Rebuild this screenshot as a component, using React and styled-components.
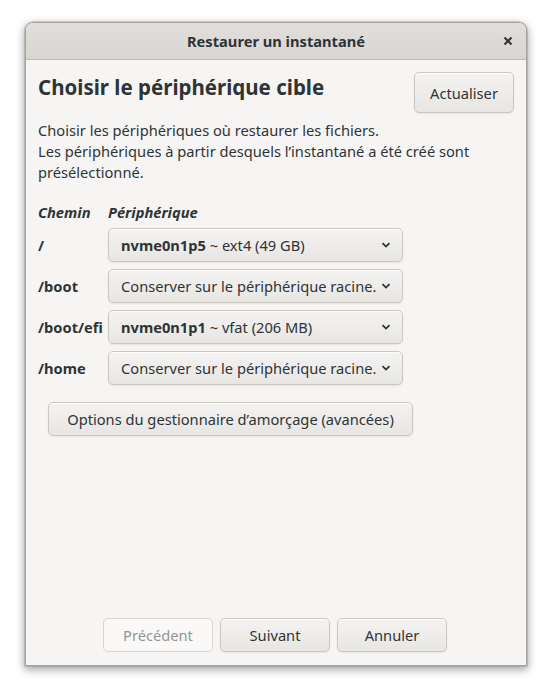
import React from 'react';
import styled, { createGlobalStyle } from 'styled-components';

const textColor = '#2e3436';
const borderColor = '#cdc7c2';
const baseSize = '14.67px';

const GlobalStyle = createGlobalStyle`
  html, body {
    margin: 0;
    padding: 0;
    background: #ffffff;
  }
  body {
    font-family: "Noto Sans", "Open Sans", sans-serif;
    font-size: ${baseSize};
    color: ${textColor};
  }
`;

const Screen = styled.div`
  width: 552px;
  height: 694px;
  box-sizing: border-box;
  padding: 22px 25px 0 25px;
`;

const Window = styled.div`
  width: 502px;
  height: 644px;
  box-sizing: border-box;
  display: flex;
  flex-direction: column;
  background: #f6f5f4;
  border: 1px solid #a8a39f;
  border-radius: 8px 8px 0 0;
  box-shadow: 0 3px 9px 1px rgba(0, 0, 0, 0.35), 0 0 0 1px rgba(0, 0, 0, 0.12);
  overflow: hidden;
`;

const TitleBar = styled.div`
  height: 36px;
  flex: none;
  display: flex;
  align-items: center;
  justify-content: center;
  position: relative;
  background: linear-gradient(#e1dedb, #dad6d2);
  border-bottom: 1px solid #bfb8b1;
  font-weight: bold;
`;

const CloseButton = styled.button`
  position: absolute;
  right: 9px;
  top: 9px;
  width: 18px;
  height: 18px;
  padding: 0;
  border: none;
  background: none;
  display: flex;
  align-items: center;
  justify-content: center;
  color: ${textColor};
`;

const Body = styled.div`
  flex: 1;
  display: flex;
  flex-direction: column;
  padding: 12px 12px 13px 12px;
`;

const Header = styled.div`
  display: flex;
  justify-content: space-between;
  align-items: flex-start;
`;

const Heading = styled.h1`
  margin: 0;
  padding: 1px 0 0 0;
  font-size: 20.5px;
  font-weight: bold;
  line-height: 28px;
`;

const Button = styled.button`
  box-sizing: border-box;
  height: ${(p) => p.$h || 34}px;
  width: ${(p) => (p.$w ? `${p.$w}px` : 'auto')};
  padding: 0 8px;
  font-family: inherit;
  font-size: ${baseSize};
  white-space: nowrap;
  color: ${(p) => (p.disabled ? '#929595' : textColor)};
  background: ${(p) => (p.disabled ? '#faf9f8' : 'linear-gradient(#f4f3f2, #e8e6e3)')};
  border: 1px solid ${(p) => (p.disabled ? '#d8d4d0' : borderColor)};
  border-radius: 5px;
  box-shadow: ${(p) => (p.disabled ? 'none' : 'inset 0 1px rgba(255,255,255,0.8), 0 1px 2px rgba(0,0,0,0.07)')};
`;

const Description = styled.p`
  margin: 7px 0 0 0;
  line-height: 21px;
`;

const Grid = styled.div`
  display: grid;
  grid-template-columns: 70px 295px;
  row-gap: 7px;
  margin-top: 20px;
  align-items: center;
`;

const ColumnLabel = styled.div`
  font-weight: bold;
  font-style: italic;
  line-height: 19px;
  margin-bottom: -1px;
`;

const PathLabel = styled.div`
  font-weight: bold;
  white-space: nowrap;
`;

const Combo = styled.div`
  box-sizing: border-box;
  height: 34px;
  display: flex;
  align-items: center;
  justify-content: space-between;
  padding: 0 10px 0 12px;
  white-space: nowrap;
  background: linear-gradient(#f4f3f2, #e8e6e3);
  border: 1px solid ${borderColor};
  border-radius: 5px;
  box-shadow: inset 0 1px rgba(255,255,255,0.8), 0 1px 2px rgba(0,0,0,0.07);
`;

const Device = styled.span`
  font-weight: bold;
`;

const Advanced = styled.div`
  margin: 17px 0 0 10px;
`;

const Footer = styled.div`
  margin-top: auto;
  display: flex;
  justify-content: center;
  gap: 7px;
  padding-right: 2px;
`;

const Chevron = () => (
  <svg width="12" height="12" viewBox="0 0 12 12">
    <path d="M2.5 4.2 L6 7.6 L9.5 4.2" fill="none" stroke="#2e3436" strokeWidth="1.8" />
  </svg>
);

const rows = [
  { path: '/', device: 'nvme0n1p5', rest: ' ~ ext4 (49 GB)' },
  { path: '/boot', rest: 'Conserver sur le périphérique racine.' },
  { path: '/boot/efi', device: 'nvme0n1p1', rest: ' ~ vfat (206 MB)' },
  { path: '/home', rest: 'Conserver sur le périphérique racine.' },
];

export default function App() {
  return (
    <Screen>
      <GlobalStyle />
      <Window>
        <TitleBar>
          Restaurer un instantané
          <CloseButton>
            <svg width="10" height="10" viewBox="0 0 10 10">
              <path d="M1.5 1.5 L8.5 8.5 M8.5 1.5 L1.5 8.5" stroke="#2e3436" strokeWidth="2" />
            </svg>
          </CloseButton>
        </TitleBar>
        <Body>
          <Header>
            <Heading>Choisir le périphérique cible</Heading>
            <Button $h={41} $w={100}>Actualiser</Button>
          </Header>
          <Description>
            Choisir les périphériques où restaurer les fichiers.
            <br />
            Les périphériques à partir desquels l’instantané a été créé sont présélectionné.
          </Description>
          <Grid>
            <ColumnLabel>Chemin</ColumnLabel>
            <ColumnLabel>Périphérique</ColumnLabel>
            {rows.map((r) => (
              <React.Fragment key={r.path}>
                <PathLabel>{r.path}</PathLabel>
                <Combo>
                  <span>
                    {r.device && <Device>{r.device}</Device>}
                    {r.rest}
                  </span>
                  <Chevron />
                </Combo>
              </React.Fragment>
            ))}
          </Grid>
          <Advanced>
            <Button $w={365}>Options du gestionnaire d’amorçage (avancées)</Button>
          </Advanced>
          <Footer>
            <Button $w={110} disabled>Précédent</Button>
            <Button $w={110}>Suivant</Button>
            <Button $w={110}>Annuler</Button>
          </Footer>
        </Body>
      </Window>
    </Screen>
  );
}
